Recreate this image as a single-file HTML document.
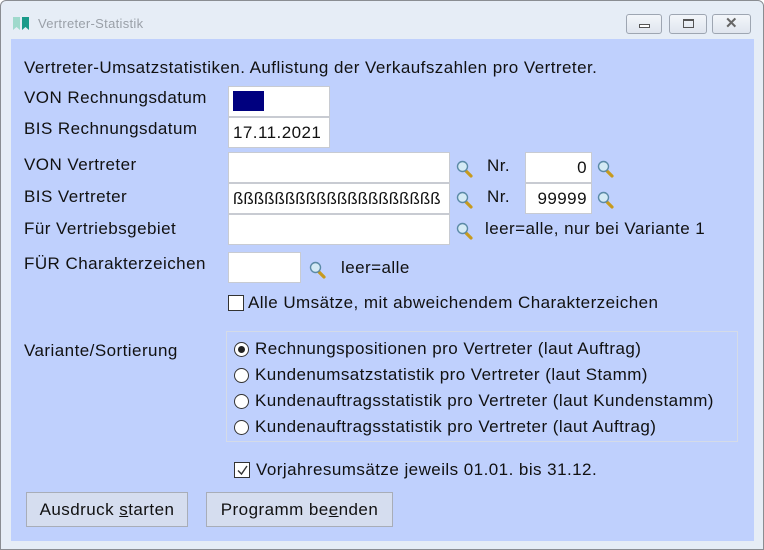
<!DOCTYPE html>
<html><head><meta charset="utf-8"><style>
*{box-sizing:border-box;margin:0;padding:0}
body{width:764px;height:550px;background:#fff;position:relative;overflow:hidden;font-family:"Liberation Sans",Arial,sans-serif;font-size:17px;letter-spacing:0.45px;color:#111}
.a{position:absolute;white-space:nowrap}
#win{position:absolute;left:0;top:0;width:764px;height:550px;border:1px solid #8a8d92;border-radius:6px 6px 0 0;background:#e6edf6}
#client{position:absolute;left:10px;top:38px;width:743px;height:502px;background:#bfd0fd}
.in{position:absolute;background:#fff;border:1px solid #c8cbd2;height:31px;font-size:17px;line-height:29px;padding:0 4px}
.lbl{position:absolute;white-space:nowrap;line-height:20px}
.btn{position:absolute;background:#d5ddef;border:1px solid #a8adb8;height:35px;line-height:33px;text-align:center;font-size:17px}
.tb{position:absolute;top:13px;width:36px;height:20px;border:1px solid #9ea6b2;border-radius:3px;background:linear-gradient(#f3f6fa,#dfe5ee)}
.radio{position:absolute;width:15px;height:15px;border:1px solid #333;border-radius:50%;background:#fff}
.chk{position:absolute;width:16px;height:16px;border:1px solid #333;background:#fff}
</style></head><body>
<div id="win">
<svg class="a" style="left:12px;top:16px" width="22" height="14"><path d="M0 0h7v13l-3.5-3L0 13z" fill="#9fd9cc"/><path d="M9 0h7v13l-3.5-3L9 13z" fill="#1a9a8a"/></svg>
<div class="a" style="left:37px;top:15px;font-size:13px;letter-spacing:0.3px;color:#9aa0a8">Vertreter-Statistik</div>
<div class="tb" style="left:625px"><div class="a" style="left:12px;top:9px;width:11px;height:4px;border:1px solid #555;background:#fff"></div></div>
<div class="tb" style="left:668px;width:38px"><div class="a" style="left:13px;top:4px;width:11px;height:9px;border:1px solid #555;border-top-width:2px"></div></div>
<div class="tb" style="left:711px;width:39px"><div class="a" style="left:12px;top:-1px;font-size:15px;color:#666;font-weight:bold">✕</div></div>
<div id="client"></div>
</div>

<div class="lbl" style="left:24px;top:58px">Vertreter-Umsatzstatistiken. Auflistung der Verkaufszahlen pro Vertreter.</div>
<div class="lbl" style="left:24px;top:88px">VON Rechnungsdatum</div>
<div class="lbl" style="left:24px;top:119px">BIS Rechnungsdatum</div>
<div class="lbl" style="left:24px;top:155px">VON Vertreter</div>
<div class="lbl" style="left:24px;top:187px">BIS Vertreter</div>
<div class="lbl" style="left:24px;top:219px">Für Vertriebsgebiet</div>
<div class="lbl" style="left:24px;top:254px">FÜR Charakterzeichen</div>
<div class="lbl" style="left:24px;top:341px">Variante/Sortierung</div>

<div class="in" style="left:228px;top:86px;width:102px"><div class="a" style="left:4px;top:4px;width:31px;height:20px;background:#00007f"></div></div>
<div class="in" style="left:228px;top:117px;width:102px">17.11.2021</div>
<div class="in" style="left:228px;top:152px;width:222px"></div>
<div class="in" style="left:228px;top:183px;width:222px;overflow:hidden;letter-spacing:0">ßßßßßßßßßßßßßßßßßßßß</div>
<div class="in" style="left:228px;top:214px;width:222px"></div>
<div class="in" style="left:525px;top:152px;width:67px;text-align:right">0</div>
<div class="in" style="left:525px;top:183px;width:67px;text-align:right">99999</div>
<div class="in" style="left:228px;top:252px;width:73px"></div>

<svg width="0" height="0" style="position:absolute"><defs><g id="mg"><path d="M8 9l6 6" stroke="#c79a1e" stroke-width="3.2" stroke-linecap="round"/><circle cx="5.5" cy="5.5" r="5" fill="#d4eaf5" stroke="#5b8aa6" stroke-width="1.4"/></g></defs></svg>
<svg class="a" style="left:456px;top:160px" width="18" height="18"><use href="#mg" x="1" y="1"/></svg>
<svg class="a" style="left:456px;top:191px" width="18" height="18"><use href="#mg" x="1" y="1"/></svg>
<svg class="a" style="left:456px;top:222px" width="18" height="18"><use href="#mg" x="1" y="1"/></svg>
<svg class="a" style="left:597px;top:160px" width="18" height="18"><use href="#mg" x="1" y="1"/></svg>
<svg class="a" style="left:597px;top:191px" width="18" height="18"><use href="#mg" x="1" y="1"/></svg>
<svg class="a" style="left:309px;top:261px" width="18" height="18"><use href="#mg" x="1" y="1"/></svg>

<div class="lbl" style="left:487px;top:156px">Nr.</div>
<div class="lbl" style="left:487px;top:187px">Nr.</div>
<div class="lbl" style="left:485px;top:219px">leer=alle, nur bei Variante 1</div>
<div class="lbl" style="left:341px;top:258px">leer=alle</div>

<div class="chk" style="left:228px;top:295px"></div>
<div class="lbl" style="left:248px;top:293px">Alle Umsätze, mit abweichendem Charakterzeichen</div>

<div class="a" style="left:226px;top:331px;width:512px;height:111px;border:1px solid #d4dbe8"></div>
<div class="radio" style="left:234px;top:342px"><div class="a" style="left:3px;top:3px;width:7px;height:7px;border-radius:50%;background:#222"></div></div>
<div class="radio" style="left:234px;top:368px"></div>
<div class="radio" style="left:234px;top:394px"></div>
<div class="radio" style="left:234px;top:420px"></div>
<div class="lbl" style="left:255px;top:339px">Rechnungspositionen pro Vertreter (laut Auftrag)</div>
<div class="lbl" style="left:255px;top:365px">Kundenumsatzstatistik pro Vertreter (laut Stamm)</div>
<div class="lbl" style="left:255px;top:391px">Kundenauftragsstatistik pro Vertreter (laut Kundenstamm)</div>
<div class="lbl" style="left:255px;top:417px">Kundenauftragsstatistik pro Vertreter (laut Auftrag)</div>

<div class="chk" style="left:234px;top:462px"><svg class="a" style="left:1px;top:1px" width="13" height="13"><path d="M2 6.5l3.5 3.5 5.5-8" stroke="#333" stroke-width="1.4" fill="none"/></svg></div>
<div class="lbl" style="left:256px;top:460px">Vorjahresumsätze jeweils 01.01. bis 31.12.</div>

<div class="btn" style="left:26px;top:492px;width:162px">Ausdruck <u>s</u>tarten</div>
<div class="btn" style="left:206px;top:492px;width:187px">Programm be<u>e</u>nden</div>
</body></html>
